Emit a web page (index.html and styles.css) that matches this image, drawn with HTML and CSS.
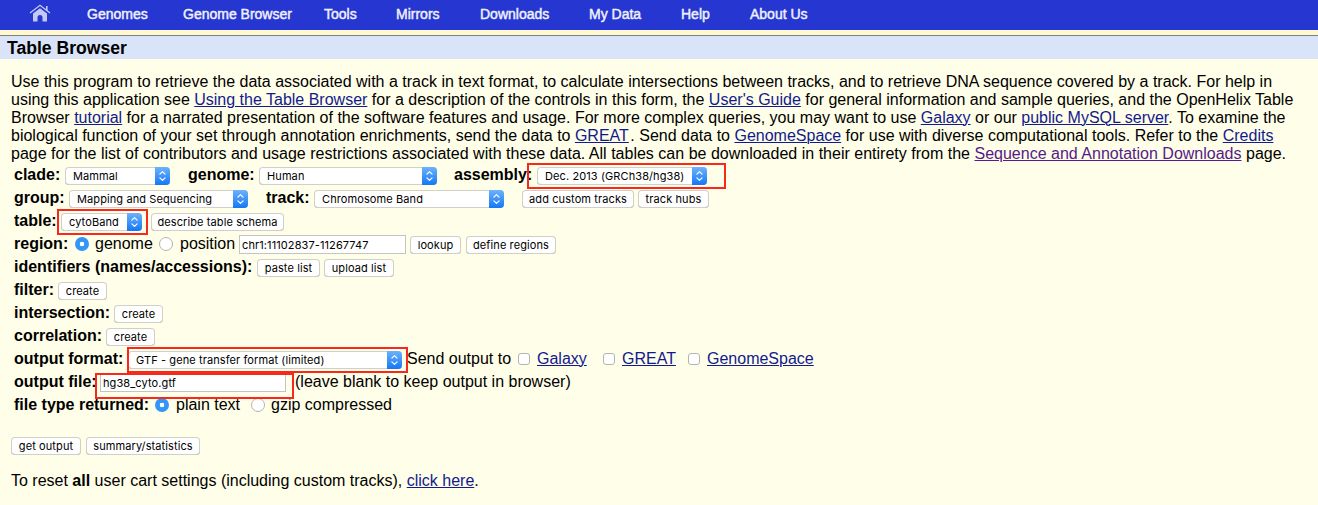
FILE: index.html
```html
<!DOCTYPE html>
<html lang="en">
<head>
<meta charset="utf-8">
<title>Table Browser</title>
<link rel="stylesheet" href="styles.css">
</head>
<body>
<svg class="defs" aria-hidden="true">
  <symbol id="chevrons" viewBox="0 0 15 18"><path d="M4.9 7.200 7.500 4.600l2.600 2.600M4.900 10.800l2.600 2.600 2.600-2.600" fill="none" stroke="#fff" stroke-width="1.2" stroke-linecap="round" stroke-linejoin="round"/></symbol>
</svg>
<nav class="nav">
  <a class="home"><svg width="22" height="19" viewBox="0 0 22 19"><path d="M1 9 11 1.2 21 9" fill="none" stroke="#c3c8f4" stroke-width="1.3"/><path d="M17 2h1.6v5L17 5.8z" fill="#c3c8f4"/><path d="M11 4.2 18 9.6V17.5h-4.500v-4a2.500 2.500 0 0 0-5 0v4H4V9.600z" fill="#c3c8f4"/></svg></a>
  <a>Genomes</a><a>Genome Browser</a><a>Tools</a><a>Mirrors</a><a>Downloads</a><a>My Data</a><a>Help</a><a>About Us</a>
</nav>
<h1 class="title">Table Browser</h1>
<main class="main">
  <p class="intro">Use this program to retrieve the data associated with a track in text format, to calculate intersections between tracks, and to retrieve DNA sequence covered by a track. For help in<br>using this application see <a>Using the Table Browser</a> for a description of the controls in this form, the <a>User's Guide</a> for general information and sample queries, and the OpenHelix Table<br>Browser <a>tutorial</a> for a narrated presentation of the software features and usage. For more complex queries, you may want to use <a>Galaxy</a> or our <a>public MySQL server</a>. To examine the<br>biological function of your set through annotation enrichments, send the data to <a class="great">GREAT</a>. Send data to <a>GenomeSpace</a> for use with diverse computational tools. Refer to the <a>Credits</a><br><span class="last">page for the list of contributors and usage restrictions associated with these data. All tables can be downloaded in their entirety from the <a class="visited">Sequence and Annotation Downloads</a> page.</span></p>
  <form class="form">
    <div class="row row-clade">
      <b>clade:</b><span class="select"><span>Mammal</span><svg><use href="#chevrons"/></svg></span>
      <b>genome:</b><span class="select"><span>Human</span><svg><use href="#chevrons"/></svg></span>
      <b>assembly:</b><span class="select"><span>Dec. 2013 (GRCh38/hg38)</span><svg><use href="#chevrons"/></svg><i class="mark mark-assembly"></i></span>
    </div>
    <div class="row row-group">
      <b>group:</b><span class="select"><span>Mapping and Sequencing</span><svg><use href="#chevrons"/></svg></span>
      <b>track:</b><span class="select"><span>Chromosome Band</span><svg><use href="#chevrons"/></svg></span>
      <button type="button">add custom tracks</button><button type="button">track hubs</button>
    </div>
    <div class="row row-table">
      <b>table:</b><span class="select"><span>cytoBand</span><svg><use href="#chevrons"/></svg><i class="mark mark-table"></i></span>
      <button type="button">describe table schema</button>
    </div>
    <div class="row row-region">
      <b>region:</b><input type="radio" name="region" checked><span>genome</span><input type="radio" name="region"><span>position</span>
      <input class="text" type="text" value="chr1:11102837-11267747"><button type="button">lookup</button><button type="button">define regions</button>
    </div>
    <div class="row row-ids"><b>identifiers (names/accessions):</b><button type="button">paste list</button><button type="button">upload list</button></div>
    <div class="row row-filter"><b>filter:</b><button type="button">create</button></div>
    <div class="row row-intersection"><b>intersection:</b><button type="button">create</button></div>
    <div class="row row-correlation"><b>correlation:</b><button type="button">create</button></div>
    <div class="row row-format">
      <b>output format:</b><span class="select"><span>GTF - gene transfer format (limited)</span><svg><use href="#chevrons"/></svg><i class="mark mark-format"></i></span>
      <span>Send output to</span><input type="checkbox"><a>Galaxy</a><input type="checkbox"><a>GREAT</a><input type="checkbox"><a>GenomeSpace</a>
    </div>
    <div class="row row-file">
      <b>output file:</b><span class="field"><input class="text" type="text" value="hg38_cyto.gtf"><i class="mark mark-file"></i></span>
      <span>(leave blank to keep output in browser)</span>
    </div>
    <div class="row row-type">
      <b>file type returned:</b><input type="radio" name="type" checked><span>plain text</span><input type="radio" name="type"><span>gzip compressed</span>
    </div>
    <div class="actions"><button type="button">get output</button><button type="button">summary/statistics</button></div>
  </form>
  <p class="reset">To reset <b>all</b> user cart settings (including custom tracks), <a>click here</a>.</p>
</main>
</body>
</html>
```
FILE: styles.css
```css
* { box-sizing: border-box; }
body {
  margin: 0;
  height: 505px;
  overflow: hidden;
  background: #fffee8;
  color: #000;
  font: 16px/18px "Liberation Sans", Arial, sans-serif;
  white-space: nowrap;
}
.defs { display: none; }
.nav {
  display: grid;
  grid-template-columns: 58px 96px 141px 72px 84px 109px 92px 69px 100px;
  height: 30px;
  padding-left: 29px;
  background: #2636d1;
  color: #f0f1fd;
  font-size: 14px;
  line-height: 29px;
  -webkit-text-stroke: 0.45px #f0f1fd;
}
.home svg { display: block; margin-top: 4px; }
.title {
  height: 29px;
  margin: 0;
  padding-left: 7px;
  border-top: 5px solid #fff9d2;
  background: #d9e4f8;
  box-shadow: inset 0 1px #808080;
  font-size: 17.6px;
  line-height: 26px;
}
.main { padding: 14px 0 0 11px; }
.intro { margin: 0; }
.great { margin-right: 1.5px; }
.last { word-spacing: 0.05px; }
a { color: inherit; }
.main a { color: #121a8f; text-decoration: underline; text-underline-offset: 1px; text-decoration-thickness: 1px; }
.main a.visited { color: #551a8b; }
.form { padding-top: 2px; }
.row {
  display: grid;
  align-items: start;
  height: 23px;
  padding: 1px 0 0 3px;
}
.row-clade { grid-template-columns: 51px 123px 71px 195px 83px 170px; }
.row-group { grid-template-columns: 55px 197px 48px 208px 116px 71px; }
.row-table { grid-template-columns: 47px 90px 133px; }
.row-region { grid-template-columns: 61px 20px 64px 21px 59px 171px 56px 90px; }
.row-ids { grid-template-columns: 243px 67px 70px; }
.row-filter { grid-template-columns: 44px 49px; }
.row-intersection { grid-template-columns: 100px 49px; }
.row-correlation { grid-template-columns: 92px 49px; }
.row-format { grid-template-columns: 114px 279px 111px 19px 66px 19px 66px 19px 110px; }
.row-file { grid-template-columns: 86px 195px 300px; }
.row-type { grid-template-columns: 141px 21px 75px 20px 130px; }
.select, button, .text {
  font: 11px/17px Inter, "Open Sans", sans-serif;
  letter-spacing: 0.1px;
  color: #000;
}
.select {
  position: relative;
  display: flex;
  justify-content: space-between;
  height: 18px;
  margin-top: 1px;
  padding-left: 8px;
  border-radius: 4px;
  background: #fff;
  box-shadow: inset 0 0 0 1px #d0d0c8, inset 0 -1px #b0b0a8;
  line-height: 19px;
}
.select svg {
  width: 15px;
  height: 18px;
  border-radius: 0 4px 4px 0;
  background: linear-gradient(#6cb3fa, #1477f8);
}
.row-clade .select:nth-of-type(1) { width: 105px; }
.row-clade .select:nth-of-type(2) { width: 178px; }
.row-group .select:nth-of-type(1) { width: 179px; }
.row-group .select:nth-of-type(2) { width: 190px; }
.row-table .select { width: 81px; }
.row-format .select { width: 274px; }
button {
  height: 18px;
  margin: 1px 0 0;
  padding: 0;
  border: 0;
  border-radius: 4px;
  background: #fff;
  box-shadow: inset 0 0 0 1px #d0d0c8, inset 0 -1px #b0b0a8;
}
.row-group button:nth-of-type(1) { width: 112px; }
.row-region button:nth-of-type(1) { width: 51px; }
.row-ids button:nth-of-type(1) { width: 63px; }
.text {
  display: block;
  width: 167px;
  height: 19px;
  margin-top: 0;
  padding: 0 2px;
  border: 1px solid #c4c4c4;
  border-radius: 0;
  background: #fff;
}
.field { position: relative; }
.field .text { width: 186px; }
input[type="radio"], input[type="checkbox"] {
  appearance: none;
  width: 14px;
  height: 14px;
  margin: 2px 0 0;
  border: 1px solid #b5b5b0;
  border-radius: 50%;
  background: #fff;
}
input[type="radio"]:checked {
  border: 0;
  background: radial-gradient(circle, #fff 0 2px, #3295f8 2.6px);
}
input[type="checkbox"] { width: 12px; height: 12px; margin-top: 3px; border-radius: 3px; }
/* Highlight frames lie over the controls they call out. */
.mark { position: absolute; border: 2px solid #f8281c; }
.mark-assembly { left: -10px; top: -4px; width: 199px; height: 26px; }
.mark-table { left: -4px; top: -4px; width: 91px; height: 26px; }
.mark-format { left: -1px; top: -4px; width: 281px; height: 26px; }
.mark-file { left: -5px; top: 0; width: 199px; height: 26px; }
.actions { display: grid; grid-template-columns: 70px 114px; column-gap: 5px; padding-top: 18px; }
.reset { margin: 17px 0 0; }
```
